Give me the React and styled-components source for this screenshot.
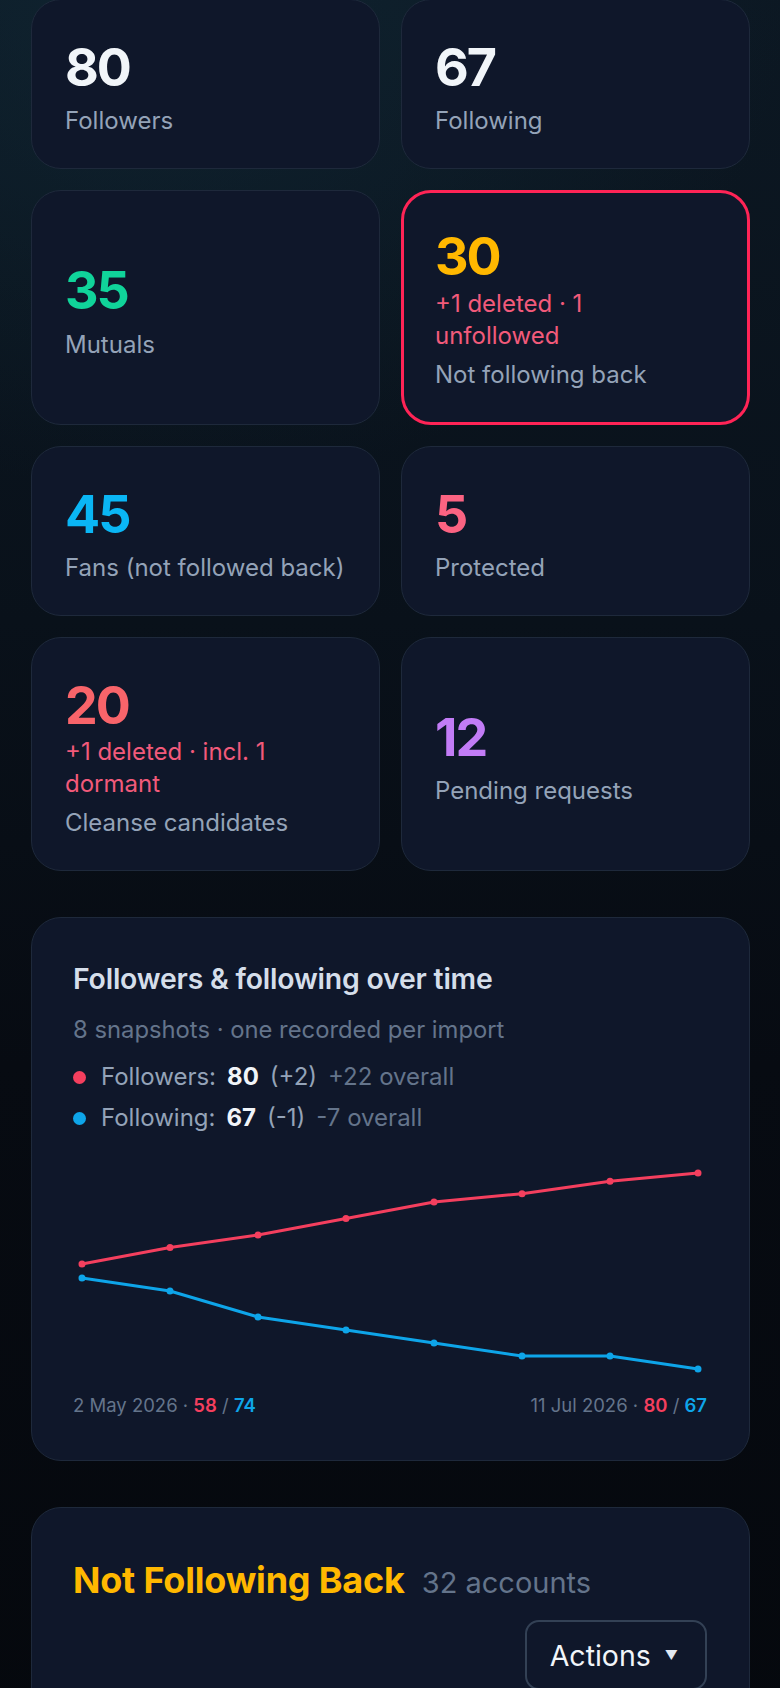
import React from "react";
import styled, { createGlobalStyle } from "styled-components";

const GlobalStyle = createGlobalStyle`
  html, body { margin: 0; padding: 0; }
  body {
    min-height: 1688px;
    overflow: hidden;
    font-family: Inter, "Noto Sans", sans-serif;
    color: #e2e8f0;
    background:
      radial-gradient(ellipse 900px 700px at 20% 0%, rgba(18, 44, 58, 0.55) 0%, rgba(18, 44, 58, 0) 70%),
      linear-gradient(180deg, #0c1823 0%, #09111a 35%, #070b12 60%, #05080d 100%);
  }
  * { box-sizing: border-box; }
`;

const Page = styled.main`
  padding: 0 30px 40px 31px;
  margin-top: -1px;
  display: flex;
  flex-direction: column;
  gap: 46px;
`;

const StatsGrid = styled.section`
  display: grid;
  grid-template-columns: 1fr 1fr;
  gap: 21px;
`;

const Card = styled.div`
  background: #0f172a;
  border: ${(p) => (p.$highlight ? "3px solid #ff2456" : "1px solid #1e293b")};
  border-radius: 30px;
  padding: ${(p) => (p.$highlight ? "34px 31px 30px" : "38px 33px 30px")};
  display: flex;
  flex-direction: column;
  justify-content: center;
`;

const Number = styled.div`
  font-size: 52px;
  line-height: 1.16;
  font-weight: 700;
  letter-spacing: -2px;
  color: ${(p) => p.$color};
`;

const Sub = styled.div`
  font-size: 24px;
  line-height: 32px;
  color: #f25a7a;
`;

const Label = styled.div`
  margin-top: 6px;
  font-size: 24px;
  line-height: 34px;
  color: #94a3b8;
  white-space: nowrap;
`;

const Stat = ({ value, color, sub, label, highlight }) => (
  <Card $highlight={highlight}>
    <Number $color={color}>{value}</Number>
    {sub && (
      <Sub>
        {sub.map((line, i) => (
          <React.Fragment key={i}>
            {i > 0 && <br />}
            {line}
          </React.Fragment>
        ))}
      </Sub>
    )}
    <Label>{label}</Label>
  </Card>
);

const Panel = styled.section`
  background: #0f172a;
  border: 1px solid #1e293b;
  border-radius: 30px;
  padding: 42px 42px 42px 41px;
`;

const ChartTitle = styled.h2`
  margin: 0;
  font-size: 28.4px;
  line-height: 38px;
  font-weight: 600;
  color: #d5deea;
  letter-spacing: -0.2px;
`;

const ChartSubtitle = styled.p`
  margin: 16px 0 0;
  font-size: 23.8px;
  line-height: 32px;
  color: #64748b;
`;

const Legend = styled.ul`
  list-style: none;
  margin: 14px 0 0;
  padding: 0;
  display: flex;
  flex-direction: column;
  gap: 7px;
`;

const LegendRow = styled.li`
  display: flex;
  align-items: center;
  gap: 11px;
  font-size: 24px;
  line-height: 34px;
  color: #94a3b8;
`;

const Dot = styled.span`
  width: 13px;
  height: 13px;
  border-radius: 50%;
  background: ${(p) => p.$color};
  margin: 0 4px 0 0;
  flex: none;
`;

const LegendValue = styled.b`
  font-weight: 700;
  color: #f1f5f9;
`;

const LegendDelta = styled.span`
  color: #94a3b8;
`;

const LegendOverall = styled.span`
  color: #64748b;
`;

const ChartSvg = styled.svg`
  display: block;
  width: 100%;
  height: 240px;
  margin-top: 10px;
`;

const ChartFooter = styled.div`
  margin-top: 7px;
  display: flex;
  justify-content: space-between;
  font-size: 18.5px;
  line-height: 26px;
  color: #64748b;
`;

const Red = styled.span`
  color: #f43f5e;
  font-weight: 600;
`;

const Blue = styled.span`
  color: #0ea5e9;
  font-weight: 600;
`;

const ListHeader = styled.div`
  display: flex;
  align-items: baseline;
  gap: 17px;
  padding-top: 8px;
`;

const ListTitle = styled.h2`
  margin: 0;
  font-size: 36px;
  line-height: 44px;
  font-weight: 700;
  color: #ffb800;
  letter-spacing: -0.2px;
`;

const ListCount = styled.span`
  font-size: 29px;
  color: #64748b;
`;

const Toolbar = styled.div`
  display: flex;
  justify-content: flex-end;
  margin-top: 18px;
`;

const ActionsButton = styled.button`
  display: flex;
  align-items: center;
  gap: 14px;
  height: 70px;
  padding: 0 27px 0 23px;
  background: #0f172a;
  border: 2px solid #334155;
  border-radius: 14px;
  color: #f1f5f9;
  font-family: Inter, "Noto Sans", sans-serif;
  font-size: 28.5px;
  cursor: pointer;
`;

const Caret = styled.span`
  font-size: 13px;
  color: #e2e8f0;
`;

const followers = [58, 62, 65, 69, 73, 75, 78, 80];
const following = [74, 73, 71, 70, 69, 68, 68, 67];

const W = 635;
const xs = followers.map((_, i) => 9 + (i * (W - 18)) / (followers.length - 1));
const scaleY = (arr, top, span) => {
  const mx = Math.max(...arr);
  const mn = Math.min(...arr);
  return arr.map((v) => top + ((mx - v) / (mx - mn)) * span);
};
const redY = scaleY(followers, 28, 91);
const blueY = scaleY(following, 133, 91);

const Series = ({ ys, color }) => (
  <g>
    <polyline
      points={ys.map((y, i) => `${xs[i]},${y}`).join(" ")}
      fill="none"
      stroke={color}
      strokeWidth="3"
      strokeLinejoin="round"
      strokeLinecap="round"
    />
    {ys.map((y, i) => (
      <circle key={i} cx={xs[i]} cy={y} r="3.5" fill={color} />
    ))}
  </g>
);

export default function App() {
  return (
    <>
      <GlobalStyle />
      <Page>
        <StatsGrid>
          <Stat value="80" color="#f1f5f9" label="Followers" />
          <Stat value="67" color="#f1f5f9" label="Following" />
          <Stat value="35" color="#10d49a" label="Mutuals" />
          <Stat
            value="30"
            color="#ffb800"
            sub={["+1 deleted · 1", "unfollowed"]}
            label="Not following back"
            highlight
          />
          <Stat value="45" color="#0ab6f5" label="Fans (not followed back)" />
          <Stat value="5" color="#fb6382" label="Protected" />
          <Stat
            value="20"
            color="#f8646a"
            sub={["+1 deleted · incl. 1", "dormant"]}
            label="Cleanse candidates"
          />
          <Stat value="12" color="#c27cf6" label="Pending requests" />
        </StatsGrid>

        <Panel>
          <ChartTitle>Followers &amp; following over time</ChartTitle>
          <ChartSubtitle>8 snapshots · one recorded per import</ChartSubtitle>
          <Legend>
            <LegendRow>
              <Dot $color="#f43f5e" />
              <span>Followers:</span>
              <LegendValue>80</LegendValue>
              <LegendDelta>(+2)</LegendDelta>
              <LegendOverall>+22 overall</LegendOverall>
            </LegendRow>
            <LegendRow>
              <Dot $color="#0ea5e9" />
              <span>Following:</span>
              <LegendValue>67</LegendValue>
              <LegendDelta>(-1)</LegendDelta>
              <LegendOverall>-7 overall</LegendOverall>
            </LegendRow>
          </Legend>
          <ChartSvg viewBox={`0 0 ${W} 240`} preserveAspectRatio="none">
            <Series ys={redY} color="#f43f5e" />
            <Series ys={blueY} color="#0ea5e9" />
          </ChartSvg>
          <ChartFooter>
            <span>
              2 May 2026 · <Red>58</Red> / <Blue>74</Blue>
            </span>
            <span>
              11 Jul 2026 · <Red>80</Red> / <Blue>67</Blue>
            </span>
          </ChartFooter>
        </Panel>

        <Panel>
          <ListHeader>
            <ListTitle>Not Following Back</ListTitle>
            <ListCount>32 accounts</ListCount>
          </ListHeader>
          <Toolbar>
            <ActionsButton type="button">
              Actions <Caret>▼</Caret>
            </ActionsButton>
          </Toolbar>
        </Panel>
      </Page>
    </>
  );
}
